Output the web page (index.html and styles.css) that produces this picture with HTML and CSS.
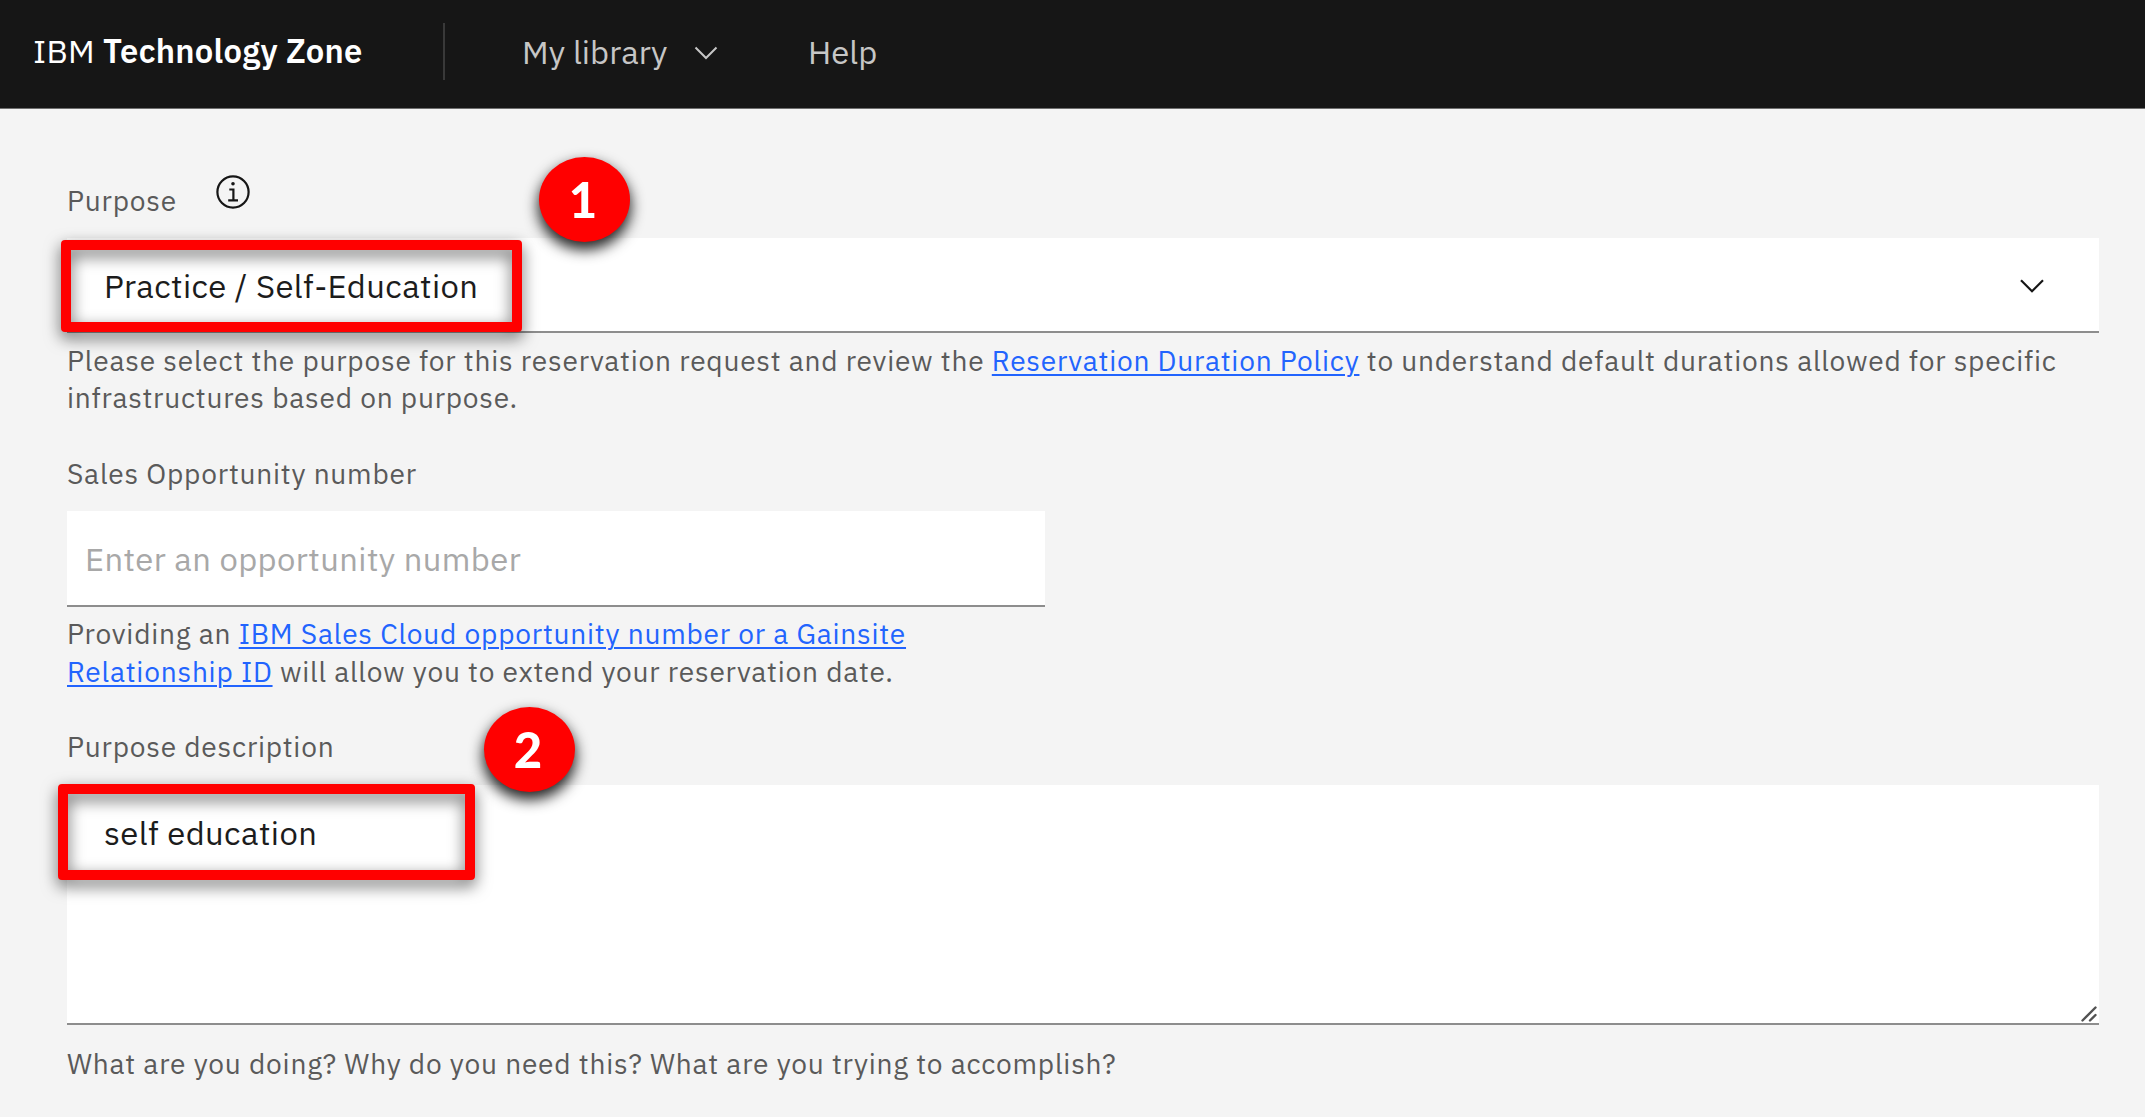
FILE: index.html
```html
<!DOCTYPE html>
<html lang="en">
<head>
<meta charset="utf-8">
<title>IBM Technology Zone</title>
<link rel="stylesheet" href="styles.css">
</head>
<body>
<header class="header">
  <div class="brand">IBM <strong>Technology Zone</strong></div>
  <div class="divider"></div>
  <nav class="nav">
    <a class="nav-library">My library</a>
    <svg class="nav-chevron" width="24" height="14" viewBox="0 0 24 14"><path d="M1.5 1.5 12 12 22.5 1.5" fill="none" stroke="#c6c6c6" stroke-width="2"/></svg>
    <a class="nav-help">Help</a>
  </nav>
</header>
<main class="form">
  <section class="field">
    <div class="label-row">
      <label class="label label-purpose">Purpose</label>
      <svg class="info" width="34" height="34" viewBox="0 0 34 34"><circle cx="17" cy="17" r="15.6" fill="none" stroke="#161616" stroke-width="2.2"/><circle cx="17" cy="8.8" r="1.8" fill="#161616"/><path d="M13.3 14.5h4.1v10M12.2 25.3h9.8" fill="none" stroke="#161616" stroke-width="2.2"/></svg>
    </div>
    <div class="select">
      <span>Practice / Self-Education</span>
      <svg width="24" height="14" viewBox="0 0 24 14"><path d="M1 1.3 12 12.3 23 1.3" fill="none" stroke="#161616" stroke-width="2.2"/></svg>
      <div class="frame frame-one"></div>
      <div class="badge badge-one">1</div>
    </div>
    <p class="helper">Please select the purpose for this reservation request and review the <a class="link">Reservation Duration Policy</a> to understand default durations allowed for specific<br>infrastructures based on purpose.</p>
  </section>
  <section class="field field-sales">
    <label class="label">Sales Opportunity number</label>
    <div class="input"><span class="placeholder">Enter an opportunity number</span></div>
    <p class="helper">Providing an <a class="link">IBM Sales Cloud opportunity number or a Gainsite<br>Relationship ID</a> will allow you to extend your reservation date.</p>
  </section>
  <section class="field field-description">
    <label class="label">Purpose description</label>
    <div class="textarea">
      <span>self education</span>
      <svg class="grip" width="16" height="16" viewBox="0 0 16 16"><path d="M1.5 14.5 14.5 1.5M9 14.5l5.5-5.5" fill="none" stroke="#525252" stroke-width="2.4" stroke-linecap="round"/></svg>
      <div class="frame frame-two"></div>
      <div class="badge badge-two">2</div>
    </div>
    <p class="helper helper-last">What are you doing? Why do you need this? What are you trying to accomplish?</p>
  </section>
</main>
</body>
</html>
```
FILE: styles.css
```css
* { box-sizing: border-box; }
body {
  margin: 0;
  min-height: 1117px;
  background: #f4f4f4;
  color: #1c1c1c;
  font-family: "IBM Plex Sans", "Noto Sans", sans-serif;
  font-size: 32.8px;
  line-height: 40px;
  letter-spacing: 0.4px;
}
svg { display: block; flex: none; }

.header {
  display: flex;
  height: 109px;
  padding-left: 33px;
  background: #161616;
  border-bottom: 1px solid #6f6f6f;
  letter-spacing: 0.05px;
  white-space: nowrap;
}
.brand {
  width: 410px;
  padding-top: 30.5px;
  color: #fff;
  letter-spacing: 0.26px;
}
.brand strong { font-weight: 600; }
.divider { width: 2px; height: 57px; margin-top: 23px; background: #393939; }
.nav { display: flex; padding: 31.5px 0 0 77px; color: #c6c6c6; }
.nav-library { width: 149px; }
.nav-chevron { margin: 14.5px 0 0 23px; }
.nav-help { margin-left: 90px; }

.form { padding: 72px 46px 0 67px; }
.label,
.helper {
  display: block;
  color: #5a5a5a;
  font-size: 28.125px;
  line-height: 37.5px;
  letter-spacing: 0.77px;
}
.label { position: relative; top: 1px; }
.label-row { display: flex; height: 57px; }
.label-purpose { width: 148.5px; }
.info { margin-top: -6px; }

.select {
  position: relative;
  display: flex;
  justify-content: space-between;
  height: 95px;
  padding: 28px 55px 0 37px;
  background: #fff;
  border-bottom: 2px solid #8d8d8d;
}
.select > svg { margin-top: 12.5px; }

.helper {
  margin: 0;
  padding-top: 8.5px;
  height: 83px;
  white-space: nowrap;
}
.link { color: #2264fe; text-decoration: underline; text-decoration-thickness: 2px; text-underline-offset: 3px; }

.field-sales { margin-top: 37.5px; }
.input {
  width: 978px;
  height: 96px;
  margin-top: 19.5px;
  padding: 28px 19px 0 18px;
  background: #fff;
  border-bottom: 2px solid #8d8d8d;
}
.placeholder { color: #a8a8a8; }

.field-description { margin-top: 37.5px; }
.textarea {
  position: relative;
  height: 240px;
  margin-top: 20.5px;
  padding: 28px 37px 0;
  background: #fff;
  border-bottom: 2px solid #8d8d8d;
}
.grip { position: absolute; right: 2px; bottom: 1px; }
.helper-last { padding-top: 19.5px; }

/* Numbered step callouts laid over the form */
.frame {
  position: absolute;
  border: 10px solid #f00;
  border-radius: 4px;
  filter: drop-shadow(0 6px 8px rgba(0, 0, 0, 0.6));
}
.frame-one { left: -6px; top: 2px; width: 461px; height: 92px; }
.frame-two { left: -9px; top: -1px; width: 417px; height: 96px; }
.badge {
  position: absolute;
  width: 91px;
  height: 85px;
  padding-right: 3px;
  border-radius: 50%;
  background: #f00;
  box-shadow: 0 7px 14px 1px rgba(0, 0, 0, 0.85);
  color: #fff;
  font: 900 49px/84px Lato, sans-serif;
  letter-spacing: 0;
  text-align: center;
}
.badge-one { left: 472px; top: -81px; }
.badge-two { left: 417px; top: -78px; }
```
